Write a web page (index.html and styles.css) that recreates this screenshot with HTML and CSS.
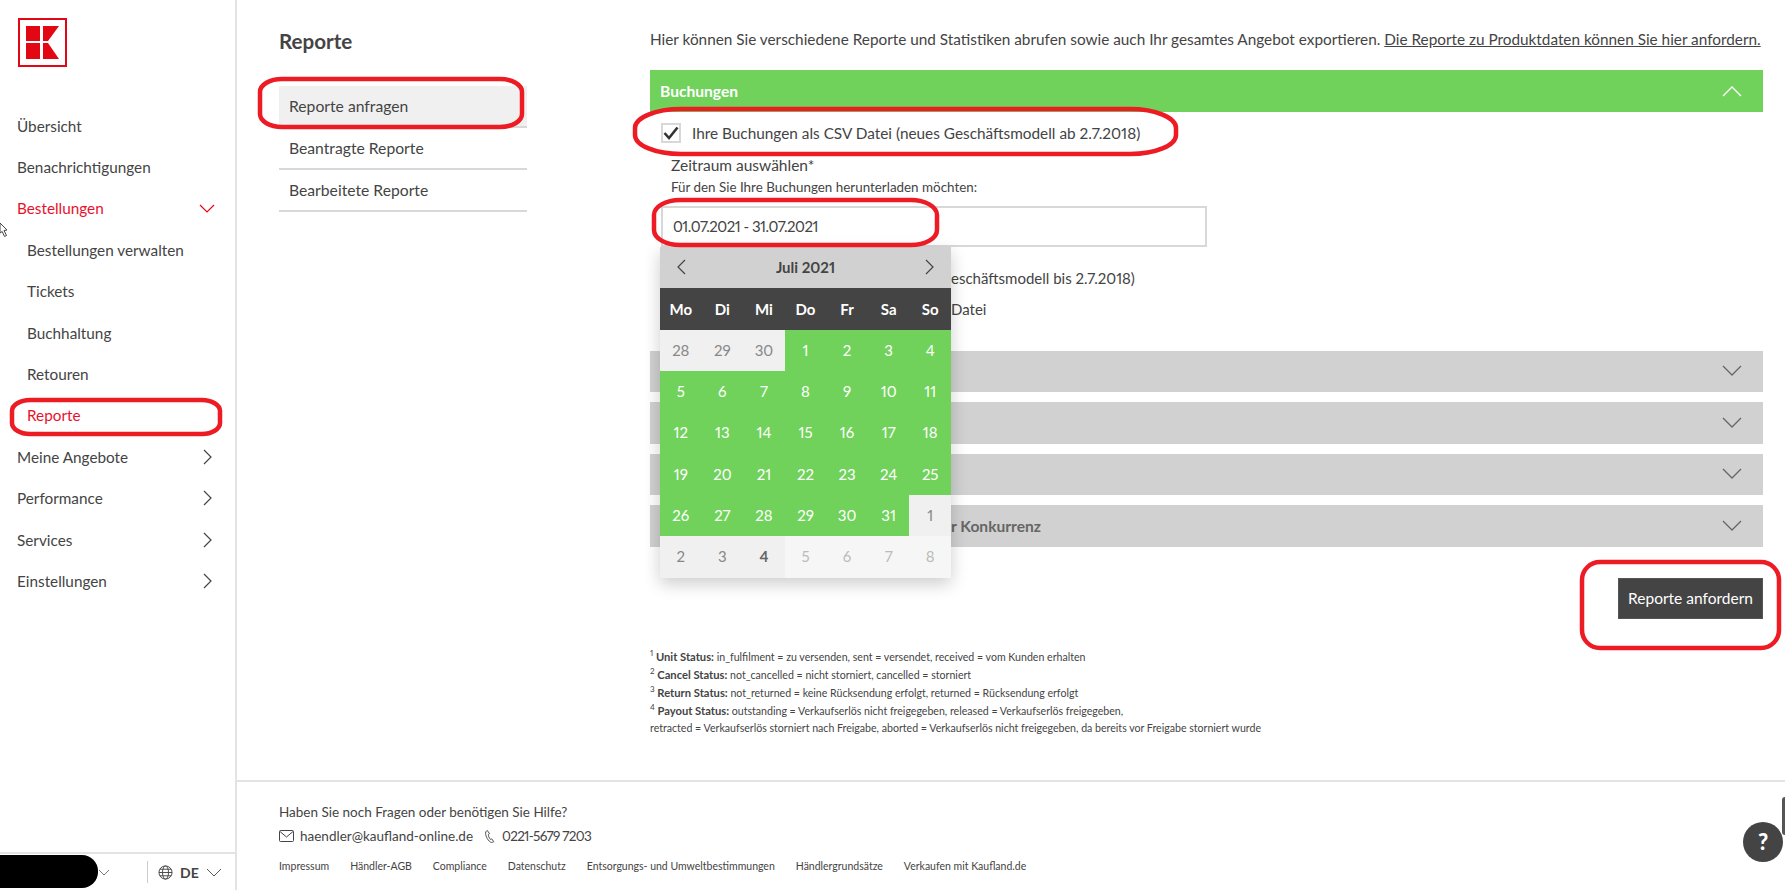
FILE: index.html
```html
<!DOCTYPE html>
<html lang="de">
<head>
    <meta charset="UTF-8">
    <title>Reporte</title>
    <link rel="stylesheet" href="styles.css">
</head>
<body>
    <div class="app">
        <aside class="sidebar">
            <svg class="logo" viewBox="0 0 49 49" width="49" height="49">
                <rect x="1" y="1" width="47" height="47" fill="#fff" stroke="#e30613" stroke-width="2"/>
                <rect x="8" y="8" width="14" height="15" fill="#e30613"/>
                <rect x="8" y="25" width="14" height="16" fill="#e30613"/>
                <polygon points="25,8 41,8 30,23 25,23" fill="#e30613"/>
                <polygon points="25,25 30,25 41,41 25,41" fill="#e30613"/>
            </svg>
            <nav class="nav">
                <a class="nav-item">Übersicht</a>
                <a class="nav-item">Benachrichtigungen</a>
                <a class="nav-item active">Bestellungen
                    <svg class="chev-down" viewBox="0 0 16 9" width="16" height="9"><path d="M1 1l7 7 7-7" fill="none" stroke="#e30613" stroke-width="1.2"/></svg>
                </a>
                <a class="nav-item sub">Bestellungen verwalten</a>
                <a class="nav-item sub">Tickets</a>
                <a class="nav-item sub">Buchhaltung</a>
                <a class="nav-item sub">Retouren</a>
                <a class="nav-item sub active">Reporte</a>
                <a class="nav-item">Meine Angebote
                    <svg class="chev-right" viewBox="0 0 10 16" width="10" height="16"><path d="M1 1l7 7-7 7" fill="none" stroke="#444" stroke-width="1.2"/></svg>
                </a>
                <a class="nav-item">Performance
                    <svg class="chev-right" viewBox="0 0 10 16" width="10" height="16"><path d="M1 1l7 7-7 7" fill="none" stroke="#444" stroke-width="1.2"/></svg>
                </a>
                <a class="nav-item">Services
                    <svg class="chev-right" viewBox="0 0 10 16" width="10" height="16"><path d="M1 1l7 7-7 7" fill="none" stroke="#444" stroke-width="1.2"/></svg>
                </a>
                <a class="nav-item">Einstellungen
                    <svg class="chev-right" viewBox="0 0 10 16" width="10" height="16"><path d="M1 1l7 7-7 7" fill="none" stroke="#444" stroke-width="1.2"/></svg>
                </a>
            </nav>
            <div class="side-bottom">
                <div class="account">
                    <span class="redacted"></span>
                    <svg viewBox="0 0 12 7" width="12" height="7"><path d="M1 1l5 5 5-5" fill="none" stroke="#777"/></svg>
                </div>
                <div class="lang">
                    <svg viewBox="0 0 16 16" width="15" height="15" fill="none" stroke="#444">
                        <circle cx="8" cy="8" r="7"/>
                        <ellipse cx="8" cy="8" rx="3.2" ry="7"/>
                        <path d="M1 8h14M2 4.5h12M2 11.5h12"/>
                    </svg>
                    <b>DE</b>
                    <svg viewBox="0 0 16 9" width="16" height="9"><path d="M1 1l7 7 7-7" fill="none" stroke="#555"/></svg>
                </div>
            </div>
        </aside>

        <div class="content">
            <div class="page">
                <div class="submenu">
                    <h2>Reporte</h2>
                    <a class="sub-item current">Reporte anfragen</a>
                    <a class="sub-item">Beantragte Reporte</a>
                    <a class="sub-item">Bearbeitete Reporte</a>
                </div>

                <main class="main">
                    <p class="intro">Hier können Sie verschiedene Reporte und Statistiken abrufen sowie auch Ihr gesamtes Angebot exportieren. <a href="#">Die Reporte zu Produktdaten können Sie hier anfordern.</a></p>

                    <div class="bar open">
                        <span>Buchungen</span>
                        <svg viewBox="0 0 20 12" width="20" height="12"><path d="M1 11l9-9 9 9" fill="none" stroke="#fff" stroke-width="1.3"/></svg>
                    </div>
                    <div class="panel">
                        <label class="option">
                            <span class="checkbox">
                                <svg viewBox="0 0 16 14" width="16" height="14"><path d="M1.5 7l4.500 5 8.500-10.500" fill="none" stroke="#333" stroke-width="2.6"/></svg>
                            </span>
                            Ihre Buchungen als CSV Datei (neues Geschäftsmodell ab 2.7.2018)
                        </label>
                        <div class="field-label">Zeitraum auswählen*</div>
                        <div class="field-hint">Für den Sie Ihre Buchungen herunterladen möchten:</div>
                        <div class="date-wrap">
                            <input class="date-input" type="text" value="01.07.2021 - 31.07.2021">
                            <div class="calendar">
                                <div class="cal-head">
                                    <svg viewBox="0 0 10 16" width="10" height="16"><path d="M9 1L2 8l7 7" fill="none" stroke="#444" stroke-width="1.2"/></svg>
                                    <b>Juli 2021</b>
                                    <svg viewBox="0 0 10 16" width="10" height="16"><path d="M1 1l7 7-7 7" fill="none" stroke="#444" stroke-width="1.2"/></svg>
                                </div>
                                <div class="cal-grid days">
                                    <span>Mo</span><span>Di</span><span>Mi</span><span>Do</span><span>Fr</span><span>Sa</span><span>So</span>
                                </div>
                                <div class="cal-grid dates">
                                    <span class="prev">28</span><span class="prev">29</span><span class="prev">30</span><span class="sel">1</span><span class="sel">2</span><span class="sel">3</span><span class="sel">4</span>
                                    <span class="sel">5</span><span class="sel">6</span><span class="sel">7</span><span class="sel">8</span><span class="sel">9</span><span class="sel">10</span><span class="sel">11</span>
                                    <span class="sel">12</span><span class="sel">13</span><span class="sel">14</span><span class="sel">15</span><span class="sel">16</span><span class="sel">17</span><span class="sel">18</span>
                                    <span class="sel">19</span><span class="sel">20</span><span class="sel">21</span><span class="sel">22</span><span class="sel">23</span><span class="sel">24</span><span class="sel">25</span>
                                    <span class="sel">26</span><span class="sel">27</span><span class="sel">28</span><span class="sel">29</span><span class="sel">30</span><span class="sel">31</span><span class="prev">1</span>
                                    <span class="prev">2</span><span class="prev">3</span><span class="prev today">4</span><span class="next">5</span><span class="next">6</span><span class="next">7</span><span class="next">8</span>
                                </div>
                            </div>
                        </div>
                        <!-- the calendar hides the start of these two lines -->
                        <div class="option behind second">eschäftsmodell bis 2.7.2018)</div>
                        <div class="option behind third">Datei</div>
                    </div>

                    <div class="bar closed"><span></span><svg viewBox="0 0 20 12" width="20" height="12"><path d="M1 1l9 9 9-9" fill="none" stroke="#666" stroke-width="1.3"/></svg></div>
                    <div class="bar closed"><span></span><svg viewBox="0 0 20 12" width="20" height="12"><path d="M1 1l9 9 9-9" fill="none" stroke="#666" stroke-width="1.3"/></svg></div>
                    <div class="bar closed"><span></span><svg viewBox="0 0 20 12" width="20" height="12"><path d="M1 1l9 9 9-9" fill="none" stroke="#666" stroke-width="1.3"/></svg></div>
                    <div class="bar closed last"><span>r Konkurrenz</span><svg viewBox="0 0 20 12" width="20" height="12"><path d="M1 1l9 9 9-9" fill="none" stroke="#666" stroke-width="1.3"/></svg></div>

                    <div class="actions"><button class="request-btn">Reporte anfordern</button></div>

                    <div class="notes">
                        <div><sup>1</sup> <b>Unit Status:</b> in_fulfilment = zu versenden, sent = versendet, received = vom Kunden erhalten</div>
                        <div><sup>2</sup> <b>Cancel Status:</b> not_cancelled = nicht storniert, cancelled = storniert</div>
                        <div><sup>3</sup> <b>Return Status:</b> not_returned = keine Rücksendung erfolgt, returned = Rücksendung erfolgt</div>
                        <div><sup>4</sup> <b>Payout Status:</b> outstanding = Verkaufserlös nicht freigegeben, released = Verkaufserlös freigegeben,</div>
                        <div>retracted = Verkaufserlös storniert nach Freigabe, aborted = Verkaufserlös nicht freigegeben, da bereits vor Freigabe storniert wurde</div>
                    </div>
                </main>
            </div>

            <footer class="footer">
                <div class="help">Haben Sie noch Fragen oder benötigen Sie Hilfe?</div>
                <div class="contact">
                    <svg viewBox="0 0 15 12" width="15" height="12"><rect x=".5" y=".5" width="14" height="11" rx="1" fill="none" stroke="#444"/><path d="M1 1.5l6.500 5.500L14 1.500" fill="none" stroke="#444"/></svg>
                    <span>haendler@kaufland-online.de</span>
                    <svg class="phone" viewBox="0 0 12 16" width="12" height="15"><path d="M3 1.500L1.500 3c-.8 3.500 1.500 8.500 5 11 .8.500 2 .5 3.500-.5l-2.200-3-1.300.6C5 9.500 4.200 7.500 4.300 5.700L5.500 5z" fill="none" stroke="#444"/></svg>
                    <span class="phone-number">0221-5679 7203</span>
                </div>
                <div class="links">
                    <a>Impressum</a><a>Händler-AGB</a><a>Compliance</a><a>Datenschutz</a><a>Entsorgungs- und Umweltbestimmungen</a><a>Händlergrundsätze</a><a>Verkaufen mit Kaufland.de</a>
                </div>
            </footer>
        </div>
    </div>

    <svg class="cursor" viewBox="0 0 9 16" width="9" height="16"><path d="M0 1l7 7-3 .5 2.500 5-2 1-2.300-5L0 11z" fill="#fff" stroke="#444"/></svg>
    <div class="side-tab"></div>
    <div class="help-bubble">?</div>

    <!-- hand drawn red marks from the screenshot -->
    <svg class="marks" viewBox="0 0 1785 890" width="1785" height="890">
        <rect x="260" y="79" width="262" height="48" rx="22" ry="13"/>
        <rect x="12" y="400" width="208" height="34" rx="18" ry="11"/>
        <rect x="635" y="109" width="541" height="45" rx="46" ry="19"/>
        <rect x="654" y="200" width="283" height="45" rx="26" ry="15"/>
        <rect x="1582" y="562" width="197" height="86" rx="18" ry="18"/>
    </svg>
</body>
</html>
```

FILE: styles.css
```css
* {
    box-sizing: border-box;
}
html, body {
    margin: 0;
    height: 890px;
    overflow: hidden;
}
body {
    font-family: Lato, "Open Sans", sans-serif;
    font-size: 15px;
    font-variant-numeric: proportional-nums;
    color: #444;
    background: #fff;
}
a {
    color: inherit;
}
.app {
    display: flex;
    height: 890px;
}

/* sidebar */
.sidebar {
    width: 237px;
    flex: none;
    display: flex;
    flex-direction: column;
    border-right: 2px solid #e3e3e3;
}
.logo {
    display: block;
    margin: 18px 0 0 18px;
}
.nav {
    margin-top: 38px;
}
.nav-item {
    display: flex;
    align-items: center;
    justify-content: space-between;
    height: 41.4px;
    padding: 0 22px 0 17px;
    font-size: 15.3px;
}
.nav-item.sub {
    padding-left: 27px;
}
.nav-item.active {
    color: #e8112d;
}
.chev-down {
    margin-right: -2px;
}
.side-bottom {
    margin-top: auto;
    height: 38px;
    border-top: 2px solid #e3e3e3;
    display: flex;
    align-items: center;
}
.account {
    width: 147px;
    height: 100%;
    display: flex;
    align-items: center;
    position: relative;
    padding-left: 98px;
}
.redacted {
    position: absolute;
    left: 0;
    top: 1px;
    width: 98px;
    height: 33px;
    background: #000;
    border-radius: 0 16px 16px 0;
}
.lang {
    display: flex;
    align-items: center;
    gap: 7px;
    height: 22px;
    padding-left: 10px;
    border-left: 1px solid #ccc;
    font-size: 14px;
}

/* content */
.content {
    flex: 1;
    display: flex;
    flex-direction: column;
    min-width: 0;
}
.page {
    display: flex;
    padding: 0 22px 0 42px;
    gap: 123px;
}
.submenu {
    width: 248px;
    flex: none;
}
.submenu h2 {
    margin: 29px 0 0;
    height: 56.5px;
    font-size: 20.6px;
    line-height: 24px;
    font-weight: 700;
}
.sub-item {
    display: flex;
    align-items: center;
    height: 42.2px;
    padding-left: 10px;
    font-size: 15.7px;
    border-bottom: 2px solid #d8d8d8;
}
.sub-item.current {
    background: #f0f0f0;
}
.main {
    flex: 1;
    min-width: 0;
    padding-top: 29px;
}
.intro {
    margin: 0 0 21px;
    line-height: 20px;
    font-size: 15.33px;
    white-space: nowrap;
}
.bar {
    display: flex;
    align-items: center;
    justify-content: space-between;
    height: 41.5px;
    padding: 0 21px 0 10px;
    font-size: 15.6px;
    font-weight: 700;
}
.bar.open {
    background: #70d25b;
    color: #fff;
}
.bar.closed {
    background: #d1d1d1;
    color: #666;
    margin-bottom: 10px;
}
.bar.last {
    padding-left: 301px;
}
.panel {
    padding: 11px 0 32px 11px;
}
.option {
    display: flex;
    align-items: center;
    gap: 11px;
    height: 20px;
    line-height: 20px;
    font-size: 15.35px;
    white-space: nowrap;
}
.checkbox {
    width: 20px;
    height: 20px;
    flex: none;
    display: flex;
    align-items: center;
    justify-content: center;
    border: 2px solid #d8d8d8;
    background: #fff;
}
.field-label {
    margin: 12px 0 0 10px;
    line-height: 20px;
    font-size: 15.5px;
}
.field-hint {
    margin: 4px 0 11px 10px;
    line-height: 16px;
    font-size: 13.4px;
}
.date-wrap {
    position: relative;
    width: 546px;
}
.date-input {
    display: block;
    width: 100%;
    height: 41px;
    padding: 0 10px;
    border: 2px solid #d8d8d8;
    font: inherit;
    font-variant-numeric: proportional-nums;
    letter-spacing: -.5px;
    color: #444;
    outline: none;
}
.option.behind {
    padding-left: 290px;
    font-size: 15px;
}
.option.second {
    margin-top: 21px;
}
.option.third {
    margin-top: 11px;
}

/* calendar dropdown */
.calendar {
    position: absolute;
    left: -1px;
    top: 41px;
    width: 291px;
    box-shadow: 0 6px 16px rgba(0, 0, 0, .2);
    z-index: 2;
}
.cal-head {
    display: flex;
    align-items: center;
    justify-content: space-between;
    height: 41px;
    padding: 0 16px;
    background: #d1d1d1;
    font-size: 15px;
}
.cal-grid {
    display: grid;
    grid-template-columns: repeat(7, 1fr);
    text-align: center;
}
.days {
    height: 42px;
    align-items: center;
    background: #444;
    color: #fff;
    font-weight: 700;
}
.dates span {
    height: 41.4px;
    line-height: 41.4px;
    font-size: 15px;
}
.dates .sel {
    background: #70d25b;
    color: #fff;
}
.dates .prev {
    background: #f0f0f0;
    color: #888;
}
.dates .today {
    font-weight: 700;
    color: #666;
}
.dates .next {
    background: #f6f6f6;
    color: #bbb;
}
.actions {
    display: flex;
    justify-content: flex-end;
    margin-top: 31px;
}
.request-btn {
    width: 145px;
    height: 41px;
    border: 1px solid #555;
    background: #444;
    color: #fff;
    font: inherit;
    font-size: 15.5px;
}
.notes {
    margin-top: 29px;
    font-size: 10.6px;
    line-height: 17.2px;
    white-space: nowrap;
}
.notes b {
    font-size: 11.2px;
}
.notes sup {
    font-size: 8px;
    line-height: 0;
}

/* footer */
.footer {
    margin-top: auto;
    height: 110px;
    padding: 20px 0 0 42px;
    border-top: 2px solid #e3e3e3;
}
.help {
    line-height: 20px;
    font-size: 13.5px;
}
.contact {
    display: flex;
    align-items: center;
    margin-top: 4px;
    height: 20px;
    gap: 6px;
    font-size: 13.5px;
}
.contact .phone {
    margin-left: 5px;
}
.phone-number {
    letter-spacing: -.7px;
}
.links {
    display: flex;
    gap: 21px;
    margin-top: 10px;
    line-height: 20px;
    font-size: 10.5px;
}

/* things on top of the page */
.cursor {
    position: absolute;
    left: 0;
    top: 222px;
}
.side-tab {
    position: absolute;
    right: 0;
    top: 797px;
    width: 3px;
    height: 38px;
    background: #555;
    border-radius: 3px 0 0 3px;
}
.help-bubble {
    position: absolute;
    left: 1743px;
    top: 822px;
    width: 40px;
    height: 40px;
    border-radius: 50%;
    background: #444;
    color: #fff;
    font-size: 22px;
    font-weight: 900;
    line-height: 40px;
    text-align: center;
}
.marks {
    position: absolute;
    left: 0;
    top: 0;
    pointer-events: none;
    z-index: 5;
}
.marks rect {
    fill: none;
    stroke: #ed1c24;
    stroke-width: 4.5;
}
```
